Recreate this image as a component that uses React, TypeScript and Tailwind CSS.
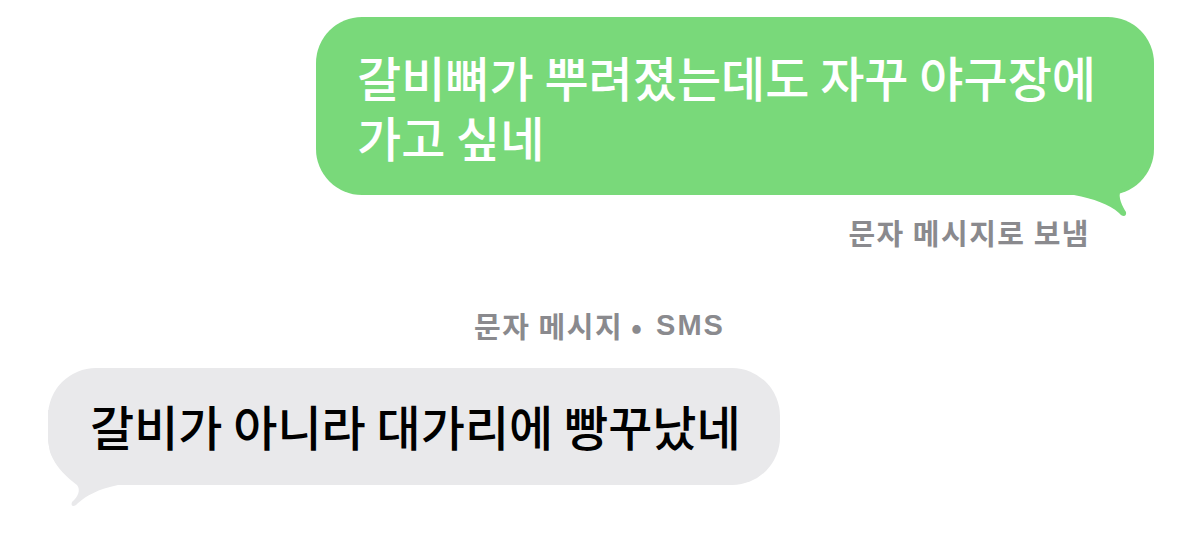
export default function App() {
  const font = { fontFamily: '"Noto Sans CJK KR", "Noto Sans", sans-serif' };
  return (
    <div className="w-[1199px] h-[541px] bg-white overflow-hidden flex flex-col" style={font}>
      {/* 보낸 메시지 */}
      <div className="relative ml-[316px] mt-[17px] w-[838px] rounded-[46px] bg-[#79d97a] pl-[41px] pr-[30px] pt-[29px] pb-[29px]">
        <p className="relative z-10 text-[48px] leading-[60px] text-white font-medium">
          <span className="block">갈비뼈가 뿌려졌는데도 자꾸 야구장에</span>
          <span className="block">가고 싶네</span>
        </p>
        <svg className="absolute right-[-10px] bottom-[-25px]" width="100" height="100" viewBox="0 0 100 100">
          <path
            d="M0 75 L10 75 C30 79 45 84 55 93 C58 97 63 97 62 92 C59 87 53 77 57 70 C67 61 81 47 90 19 L90 0 L0 0 Z"
            fill="#79d97a"
          />
        </svg>
      </div>
      <div className="self-end mr-[109px] mt-[19px] text-[29px] leading-[36px] font-semibold text-[#8a8a8e] tracking-[1.5px]">
        문자 메시지로 보냄
      </div>

      <div className="self-center flex items-center mt-[57px] text-[29px] leading-[36px] font-semibold text-[#8a8a8e]">
        <span className="tracking-[1.5px]">문자 메시지</span>
        <span className="ml-[8px] mr-[14px]">•</span>
        <span className="tracking-[2px] font-bold" style={{ fontFamily: '"Liberation Sans", Arial, sans-serif' }}>SMS</span>
      </div>

      {/* 받은 메시지 */}
      <div className="relative ml-[48px] mt-[25px] w-[732px] h-[117px] rounded-[48px] bg-[#e9e9eb] pl-[42px] pt-[27px]">
        <p className="relative z-10 text-[48px] leading-[60px] text-black font-medium">
          갈비가 아니라 대가리에 빵꾸났네
        </p>
        <svg className="absolute left-[-10px] bottom-[-25px]" width="100" height="100" viewBox="0 0 100 100">
          <path
            d="M100 75 L80 75 C60 79 48 86 40 93 C37 97 32 97 34 92 C40 87 43 80 39 75 C30 68 18 58 12 42 L10 30 L10 0 L100 0 Z"
            fill="#e9e9eb"
          />
        </svg>
      </div>
    </div>
  );
}
